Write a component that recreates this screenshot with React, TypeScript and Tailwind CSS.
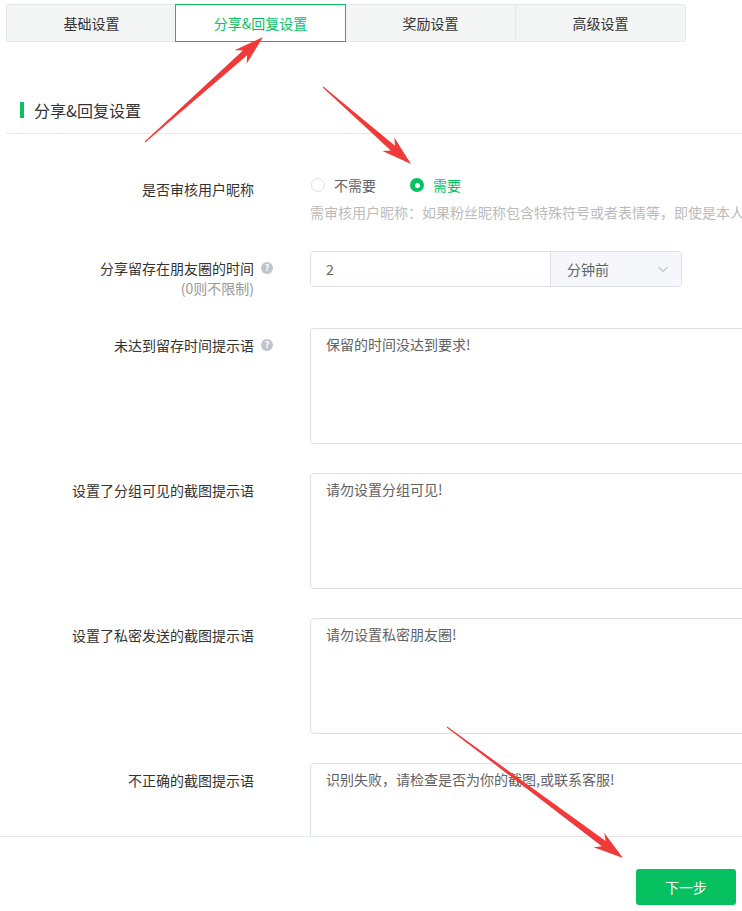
import React from "react";

const FONT = { fontFamily: '"Noto Sans CJK SC", "Noto Sans", sans-serif' };

function arrowPoints(tx: number, ty: number, px: number, py: number, headLen = 30, headHalf = 9, shaftEnd = 3.2) {
  const dx = px - tx;
  const dy = py - ty;
  const L = Math.hypot(dx, dy);
  const ux = dx / L;
  const uy = dy / L;
  const nx = -uy;
  const ny = ux;
  const bx = px - ux * headLen;
  const by = py - uy * headLen;
  const nb = (d: number) => [bx + ux * 6 + nx * d, by + uy * 6 + ny * d];
  const pts: number[][] = [
    [tx + nx * 0.5, ty + ny * 0.5],
    nb(shaftEnd),
    [bx + nx * headHalf, by + ny * headHalf],
    [px, py],
    [bx - nx * headHalf, by - ny * headHalf],
    nb(-shaftEnd),
    [tx - nx * 0.5, ty - ny * 0.5],
  ];
  return pts.map((p) => `${p[0].toFixed(1)},${p[1].toFixed(1)}`).join(" ");
}

function Help() {
  return (
    <span className="ml-[7px] mt-[4px] w-[12px] h-[12px] rounded-full bg-[#c0c4cc] text-white text-[9px] leading-[12px] font-bold flex items-center justify-center shrink-0">
      ?
    </span>
  );
}

function Row({
  label,
  sub,
  help,
  children,
}: {
  label: string;
  sub?: string;
  help?: boolean;
  children: React.ReactNode;
}) {
  return (
    <div className="flex mb-[29px]">
      <div className="w-[266px] shrink-0 flex justify-end pt-[7px]">
        <div className="text-right">
          <div className="text-[14px] leading-5 text-[#333]">{label}</div>
          {sub && <div className="text-[14px] leading-[21px] text-[#999]">{sub}</div>}
        </div>
        <div className="w-[18px] shrink-0">{help && <Help />}</div>
      </div>
      <div className="ml-[38px]">{children}</div>
    </div>
  );
}

function Area({ text }: { text: string }) {
  return (
    <div className="w-[460px] h-[116px] border border-[#dcdfe6] rounded-[4px] bg-white px-[15px] pt-[5px] text-[14px] leading-[21px] text-[#606266]">
      {text}
    </div>
  );
}

export default function App() {
  const tabs = ["基础设置", "分享&回复设置", "奖励设置", "高级设置"];
  return (
    <div className="relative w-full h-screen overflow-hidden bg-white" style={FONT}>
      <div className="pl-[6px] pt-[4px] w-[900px]">
        <div className="w-[680px] h-[38px] flex bg-[#f4f5f5] border border-[#e4e7ed] rounded-[3px]">
          {tabs.map((t, i) => (
            <div
              key={t}
              className={
                i === 1
                  ? "flex-1 flex items-center justify-center text-[14px] text-[#07c160] bg-white outline outline-1 outline-[#07c160] relative"
                  : i === 0
                  ? "flex-1 flex items-center justify-center text-[14px] text-[#333]"
                  : "flex-1 flex items-center justify-center text-[14px] text-[#333] border-l border-[#e4e7ed]"
              }
            >
              {t}
            </div>
          ))}
        </div>

        <div className="mt-[57px] pb-[12px] border-b border-[#e4e7ed] flex items-center">
          <span className="ml-[14px] w-[4px] h-[16px] bg-[#07c160]" />
          <span className="ml-[10px] text-[16px] leading-[22px] text-[#333]">分享&amp;回复设置</span>
        </div>

        <div className="mt-[38px]">
          <Row label="是否审核用户昵称">
            <div className="h-[30px] flex items-center text-[14px] -mt-[2px] mb-[2px]">
              <span className="w-[14px] h-[14px] rounded-full border border-[#dcdfe6] bg-white ml-[1px]" />
              <span className="ml-[9px] text-[#606266]">不需要</span>
              <span className="ml-[34px] w-[14px] h-[14px] rounded-full bg-[#07c160] flex items-center justify-center">
                <span className="w-[5px] h-[5px] rounded-full bg-white" />
              </span>
              <span className="ml-[9px] text-[#07c160]">需要</span>
            </div>
            <div className="text-[14px] leading-5 text-[#bbbbbb] whitespace-nowrap">
              需审核用户昵称：如果粉丝昵称包含特殊符号或者表情等，即使是本人
            </div>
          </Row>

          <Row label="分享留存在朋友圈的时间" sub="(0则不限制)" help>
            <div className="w-[372px] h-[36px] flex border border-[#dcdfe6] rounded-[4px] overflow-hidden">
              <div className="w-[239px] flex items-center pl-[15px] text-[14px] text-[#606266] bg-white">2</div>
              <div className="flex-1 flex items-center justify-between border-l border-[#dcdfe6] bg-[#f5f7fa] pl-[16px] pr-[12px] text-[14px] text-[#606266]">
                <span>分钟前</span>
                <svg width="12" height="12" viewBox="0 0 12 12" fill="none" stroke="#c0c4cc" strokeWidth="1.2">
                  <path d="M1.5 4 L6 8.5 L10.5 4" />
                </svg>
              </div>
            </div>
          </Row>

          <Row label="未达到留存时间提示语" help>
            <Area text="保留的时间没达到要求!" />
          </Row>
          <Row label="设置了分组可见的截图提示语">
            <Area text="请勿设置分组可见!" />
          </Row>
          <Row label="设置了私密发送的截图提示语">
            <Area text="请勿设置私密朋友圈!" />
          </Row>
          <Row label="不正确的截图提示语">
            <Area text="识别失败，请检查是否为你的截图,或联系客服!" />
          </Row>
        </div>
      </div>

      <div className="absolute left-0 right-0 top-[836px] bottom-0 bg-white border-t border-[#e4e7ed] flex justify-end items-end pr-[6px] pb-[6px]">
        <button className="w-[100px] h-[36px] rounded-[3px] bg-[#07c160] text-white text-[14px]">下一步</button>
      </div>

      <svg className="absolute inset-0 pointer-events-none" width="742" height="911" viewBox="0 0 742 911">
        <polygon points={arrowPoints(145, 142, 263, 37)} fill="#f03a3a" />
        <polygon points={arrowPoints(323, 87, 411, 164)} fill="#f03a3a" />
        <polygon points={arrowPoints(447, 727, 623, 858)} fill="#f03a3a" />
      </svg>
    </div>
  );
}
